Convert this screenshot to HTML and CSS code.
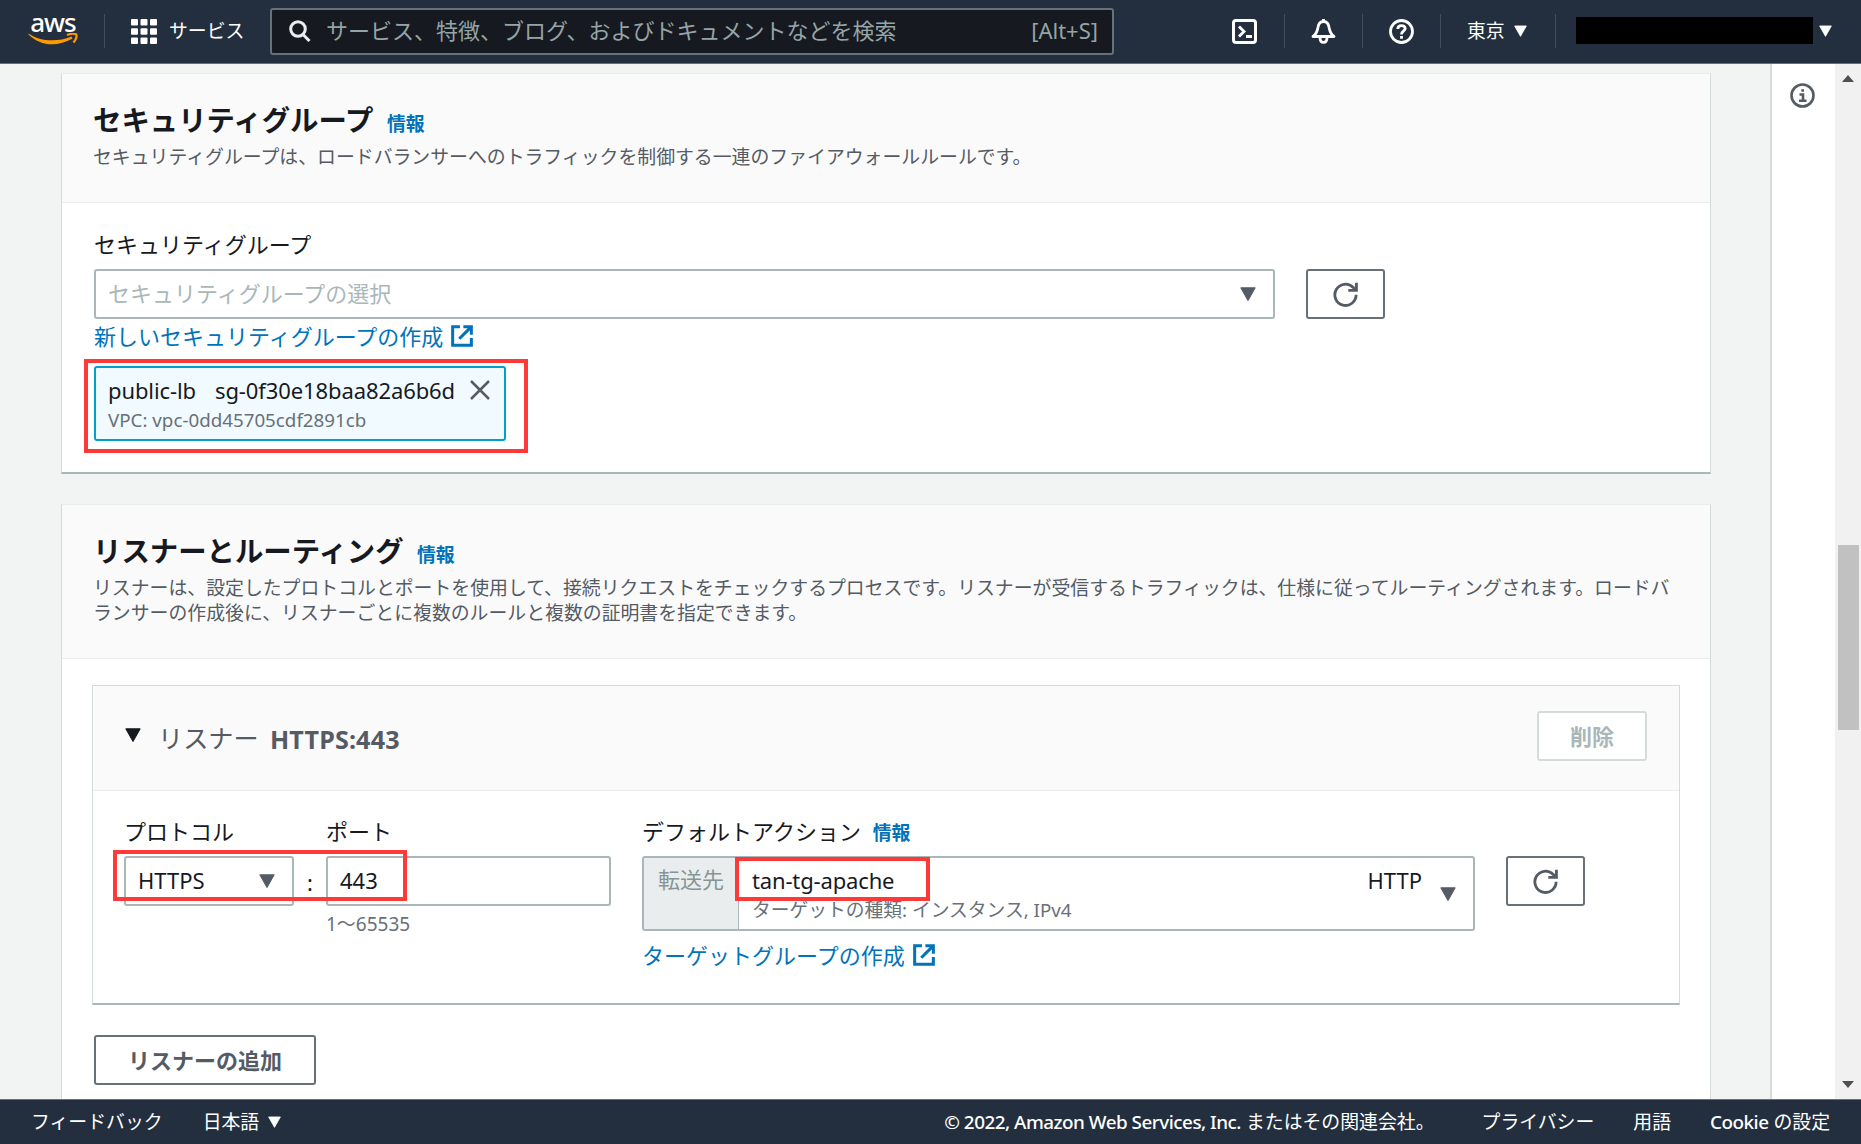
FILE: index.html
```html
<!DOCTYPE html>
<html lang="ja">
<head>
  <meta charset="UTF-8">
  <meta name="viewport" content="width=device-width, initial-scale=1.0">
  <title>ロードバランサーの作成 | EC2</title>
  <link rel="stylesheet" href="styles.css">
</head>
<body>

  <!-- Icons used more than once -->
  <svg class="sprite">
    <symbol id="icon-refresh" viewBox="0 0 16 16">
      <path d="M14.8 8.2A6.8 6.8 0 1 1 12.8 3.4L14.6 5.2M15 0.4V5.400H9.800" fill="none" stroke="currentColor" stroke-width="1.8"/>
    </symbol>
    <symbol id="icon-external" viewBox="0 0 16 16">
      <path d="M6.5 1.2H1.2V14.8H14.8V9.500M9 1.2H14.8V7M14.5 1.5L6 10" fill="none" stroke="currentColor" stroke-width="2.200"/>
    </symbol>
    <symbol id="icon-caret" viewBox="0 0 16 14">
      <path d="M0.8 0.8H15.2L8 13.6Z" fill="currentColor" stroke="currentColor" stroke-width="1" stroke-linejoin="round"/>
    </symbol>
  </svg>

  <header class="topbar">
    <div class="logo">
      <span>aws</span>
      <svg viewBox="0 0 50 13"><path d="M0.500 0.500C12 8.500 29 9.500 43.500 3.500L44.500 5.500C29 14.500 12 13 0.500 1.500Z" fill="#f90"/><path d="M39 2C43 0.500 47 0.500 48.300 1.500C49 3.500 47.500 7 45.500 9.500" fill="none" stroke="#f90" stroke-width="2.200"/></svg>
    </div>
    <div class="divider"></div>
    <a class="services">
      <svg viewBox="0 0 26 25" fill="#fff"><rect width="7" height="6.500" rx="1"/><rect x="9.500" width="7" height="6.500" rx="1"/><rect x="19" width="7" height="6.500" rx="1"/><rect y="9.300" width="7" height="6.500" rx="1"/><rect x="9.500" y="9.300" width="7" height="6.500" rx="1"/><rect x="19" y="9.300" width="7" height="6.500" rx="1"/><rect y="18.500" width="7" height="6.500" rx="1"/><rect x="9.500" y="18.500" width="7" height="6.500" rx="1"/><rect x="19" y="18.500" width="7" height="6.500" rx="1"/></svg>
      <span>サービス</span>
    </a>
    <div class="search">
      <svg viewBox="0 0 22 22" fill="none" stroke="#eaeded" stroke-width="3"><circle cx="9" cy="9" r="7.300"/><path d="M14 14.500L20.500 21"/></svg>
      <span class="search-text">サービス、特徴、ブログ、およびドキュメントなどを検索</span>
      <span class="shortcut">[Alt+S]</span>
    </div>
    <nav class="tools">
      <div class="tool"><svg viewBox="0 0 25 25" fill="none" stroke="#fff" stroke-width="3"><rect x="1.500" y="1.500" width="22" height="22" rx="2.500"/><path d="M7 7.500L12 12.500L7 17.500M14 17.500H20" stroke-width="2.800"/></svg></div>
      <div class="tool"><svg viewBox="0 0 25 25" fill="none" stroke="#fff" stroke-width="2.800"><path d="M2 17.500C5.500 15 6.300 12 6.800 9C7.300 5 9.500 2.500 12.500 2.500S17.700 5 18.200 9C18.700 12 19.500 15 23 17.500Z" stroke-linejoin="round"/><path d="M9 18.500C9 25 16 25 16 18.500M12.500 0V3"/></svg></div>
      <div class="tool"><svg viewBox="0 0 25 25" fill="none" stroke="#fff" stroke-width="2.800"><circle cx="12.500" cy="12.500" r="11"/><path d="M8.800 10C8.800 5.500 16.200 5.500 16.200 9.500C16.200 12 12.500 12 12.500 15.500M12.500 17V19.800"/></svg></div>
      <div class="region">東京 <svg class="caret"><use href="#icon-caret"/></svg></div>
      <div class="account"><div class="account-name"></div><svg class="caret"><use href="#icon-caret"/></svg></div>
    </nav>
  </header>

  <div class="page">
    <main class="content">

      <!-- Security groups -->
      <section class="card">
        <div class="card-header">
          <h2>セキュリティグループ <a class="info">情報</a></h2>
          <p>セキュリティグループは、ロードバランサーへのトラフィックを制御する一連のファイアウォールルールです。</p>
        </div>
        <div class="card-body">
          <div class="label">セキュリティグループ</div>
          <div class="row">
            <div class="field group-select">
              <span>セキュリティグループの選択</span>
              <svg class="arrow"><use href="#icon-caret"/></svg>
            </div>
            <button class="btn btn-refresh"><svg><use href="#icon-refresh"/></svg></button>
          </div>
          <a class="link">新しいセキュリティグループの作成<svg><use href="#icon-external"/></svg></a>
          <div class="token">
            <div class="token-name"><span class="w-name">public-lb</span><span>sg-0f30e18baa82a6b6d</span>
              <svg viewBox="0 0 20 20"><path d="M1 1L19 19M19 1L1 19" stroke="#545b64" stroke-width="2.500"/></svg>
            </div>
            <div class="token-vpc">VPC: vpc-0dd45705cdf2891cb</div>
            <div class="mark mark-token"></div>
          </div>
        </div>
      </section>

      <!-- Listeners and routing -->
      <section class="card">
        <div class="card-header card-header-tall">
          <h2>リスナーとルーティング <a class="info">情報</a></h2>
          <p>リスナーは、設定したプロトコルとポートを使用して、接続リクエストをチェックするプロセスです。リスナーが受信するトラフィックは、仕様に従ってルーティングされます。ロードバ<br>ランサーの作成後に、リスナーごとに複数のルールと複数の証明書を指定できます。</p>
        </div>
        <div class="card-body listeners">
          <div class="listener">
            <div class="listener-header">
              <svg class="arrow"><use href="#icon-caret"/></svg>
              <span class="listener-title">リスナー</span>
              <strong>HTTPS:443</strong>
              <button class="btn btn-delete" disabled>削除</button>
            </div>
            <div class="listener-body">
              <div class="col-protocol">
                <div class="label">プロトコル</div>
                <div class="field"><span>HTTPS</span><svg class="arrow"><use href="#icon-caret"/></svg></div>
                <div class="mark mark-port"></div>
              </div>
              <div class="colon">:</div>
              <div class="col-port">
                <div class="label">ポート</div>
                <div class="field"><span>443</span></div>
                <div class="hint">1〜65535</div>
              </div>
              <div class="col-action">
                <div class="label">デフォルトアクション <a class="info">情報</a></div>
                <div class="forward">
                  <div class="forward-label">転送先</div>
                  <div class="forward-target">
                    <div class="target-name">tan-tg-apache</div>
                    <div class="target-type">ターゲットの種類: インスタンス, IPv4</div>
                    <div class="mark mark-target"></div>
                  </div>
                  <div class="forward-protocol">HTTP</div>
                  <svg class="arrow"><use href="#icon-caret"/></svg>
                </div>
                <a class="link">ターゲットグループの作成<svg><use href="#icon-external"/></svg></a>
              </div>
              <button class="btn btn-refresh"><svg><use href="#icon-refresh"/></svg></button>
            </div>
          </div>
          <button class="btn btn-add">リスナーの追加</button>
        </div>
      </section>

    </main>

    <aside class="help-panel">
      <svg viewBox="0 0 25 25" fill="none" stroke="#545b64" stroke-width="2.600"><circle cx="12.500" cy="12.500" r="11"/><path d="M9.500 11.500H13V17.500M9 17.800H16.500M11.300 7.500H14"/></svg>
    </aside>

    <div class="scrollbar">
      <svg viewBox="0 0 12 7"><path d="M0 7L6 0L12 7Z" fill="#505050"/></svg>
      <div class="thumb"></div>
      <svg viewBox="0 0 12 7"><path d="M0 0L6 7L12 0Z" fill="#505050"/></svg>
    </div>
  </div>

  <footer class="footer">
    <a>フィードバック</a>
    <a class="language">日本語 <svg class="caret"><use href="#icon-caret"/></svg></a>
    <span class="copyright"><span class="latin">© 2022, Amazon Web Services, Inc.</span> またはその関連会社。</span>
    <a class="privacy">プライバシー</a>
    <a class="terms">用語</a>
    <a class="cookie"><span class="latin">Cookie</span> の設定</a>
  </footer>

</body>
</html>
```
FILE: styles.css
```css
* {
  box-sizing: border-box;
}

body {
  margin: 0;
  height: 1144px;
  display: flex;
  flex-direction: column;
  overflow: hidden;
  font-family: 'Noto Sans', 'Noto Sans CJK JP', sans-serif;
  font-size: 22px;
  line-height: 34px;
  color: #16191f;
  background: #f2f3f3;
}

svg {
  display: block;
  flex: none;
}

.sprite {
  position: absolute;
  width: 0;
  height: 0;
}

/* Top bar */
.topbar {
  display: flex;
  align-items: center;
  flex: none;
  height: 64px;
  padding: 0 29px 1px 28px;
  background: #232f3e;
  border-bottom: 1px solid #687078;
  color: #fff;
  font-size: 18.86px;
}

.logo {
  width: 50px;
}

.logo span {
  display: block;
  height: 18px;
  margin-top: -2px;
  font: 500 26px/14px 'Noto Sans', sans-serif;
  letter-spacing: -1px;
  text-align: center;
}

.logo svg {
  width: 50px;
  height: 13px;
}

.divider {
  width: 1px;
  height: 34px;
  margin: 0 26px;
  background: #414d5c;
}

.services {
  display: flex;
  align-items: center;
  gap: 12px;
  width: 139px;
}

.services svg {
  width: 26px;
  height: 25px;
}

.search {
  display: flex;
  align-items: center;
  width: 844px;
  height: 47px;
  padding: 0 14px 0 17px;
  background: #16191f;
  border: 2px solid #687078;
  border-radius: 3px;
  color: #95a5a6;
  font-size: 22px;
}

.search span {
  margin-top: -2px;
}

.search svg {
  width: 22px;
  height: 22px;
  margin-right: 15px;
}

.search-text {
  flex: 1;
}

.tools {
  display: flex;
  align-items: center;
  margin-left: auto;
}

.tools > div {
  display: flex;
  align-items: center;
  height: 34px;
}

.tools > div + div {
  border-left: 1px solid #414d5c;
}

.tools .tool {
  width: 78px;
  padding-left: 26px;
}

.tool svg {
  width: 25px;
  height: 25px;
}

.caret {
  width: 13px;
  height: 12px;
}

.tools .region {
  width: 115px;
  padding-left: 26px;
  gap: 9px;
}

.tools .account {
  padding-left: 20px;
  gap: 6px;
}

.account-name {
  width: 237px;
  height: 27px;
  margin-top: -1px;
  background: #000;
}

/* Page */
.page {
  display: flex;
  flex: 1;
  min-height: 0;
}

.content {
  flex: 1;
  height: 1035px;
  padding: 9px 59px 0 61px;
  overflow: hidden;
}

.card {
  margin-bottom: 30px;
  background: #fff;
  border: 1px solid #d5dbdb;
  border-top-color: #eaeded;
  border-bottom: 2px solid #aab7b8;
}

.card-header {
  height: 129px;
  padding: 26px 31px 0;
  background: #fafafa;
  border-bottom: 1px solid #eaeded;
}

.card-header-tall {
  height: 154px;
}

h2 {
  margin: 0;
  font-size: 28.4px;
  line-height: 41px;
}

.info {
  margin-left: 6px;
  color: #0073bb;
  font-size: 18.86px;
  font-weight: bold;
}

.card-header p {
  margin: 0;
  color: #545b64;
  font-size: 18.86px;
  line-height: 25px;
  white-space: nowrap;
}

.card-body {
  height: 269px;
  padding: 24px 31px 0 32px;
}

.label {
  height: 42px;
}

.row {
  display: flex;
  gap: 31px;
}

.field {
  display: flex;
  align-items: center;
  justify-content: space-between;
  height: 50px;
  padding: 0 17px 0 12px;
  background: #fff;
  border: 2px solid #aab7b8;
  border-radius: 3px;
}

.field span {
  margin-top: -2px;
}

.group-select {
  width: 1181px;
  color: #aab7b8;
}

.arrow {
  width: 16px;
  height: 14px;
  color: #545b64;
}

.btn {
  height: 50px;
  padding: 0;
  background: #fff;
  border: 2px solid #687078;
  border-radius: 3px;
  color: #545b64;
  font: bold 22px/34px 'Noto Sans', 'Noto Sans CJK JP', sans-serif;
}

.btn-refresh {
  width: 79px;
}

.btn-refresh svg {
  width: 25px;
  height: 25px;
  margin: auto;
}

.link {
  display: flex;
  align-items: center;
  height: 33px;
  color: #0073bb;
}

.link svg {
  width: 22px;
  height: 22px;
  margin-left: 8px;
}

.token {
  position: relative;
  width: 412px;
  height: 75px;
  margin-top: 14px;
  padding: 7px 14px 8px 12px;
  background: #f1faff;
  border: 2px solid #00a1c9;
  border-radius: 3px;
}

.token-name {
  display: flex;
  align-items: center;
  height: 30px;
  letter-spacing: -0.1px;
}

.token-name svg {
  width: 20px;
  height: 20px;
  margin-left: auto;
}

.w-name {
  width: 107px;
}

.token-vpc {
  color: #687078;
  font-size: 18.75px;
  line-height: 30px;
}

/* Red marker boxes drawn over the form */
.mark {
  position: absolute;
  border: 4px solid #ff3838;
}

.mark-token {
  left: -12px;
  top: -9px;
  width: 444px;
  height: 94px;
}

/* Listener */
.card-body.listeners {
  height: 480px;
  padding-top: 26px;
}

.listener {
  height: 320px;
  margin: 0 -1px 0 -2px;
  border: 1px solid #d5dbdb;
  border-bottom: 2px solid #aab7b8;
}

.listener-header {
  display: flex;
  align-items: center;
  height: 105px;
  padding: 0 32px;
  background: #fafafa;
  border-bottom: 1px solid #eaeded;
  color: #545b64;
  font-size: 25.14px;
}

.listener-header .arrow {
  margin-right: 17px;
  margin-top: -6px;
  color: #16191f;
}

.listener-title {
  width: 112px;
}

.listener-header strong {
  margin-top: 2px;
  letter-spacing: 0.15px;
}

.btn-delete {
  width: 110px;
  margin: -5px 0 0 auto;
  border-color: #d5dbdb;
  color: #aab7b8;
}

.listener-body {
  display: flex;
  padding: 23px 31px 0;
}

.col-protocol {
  position: relative;
  width: 170px;
}

.colon {
  width: 32px;
  padding-top: 51px;
  text-align: center;
}

.col-port {
  width: 285px;
  margin-right: 31px;
}

.hint {
  padding-top: 1px;
  color: #687078;
  font-size: 19px;
}

.col-action {
  width: 833px;
  margin-right: 31px;
}

.col-action .link {
  margin-top: 7px;
}

.listener-body .btn-refresh {
  margin-top: 42px;
}

.forward {
  display: flex;
  height: 75px;
  border: 2px solid #aab7b8;
  border-radius: 3px;
}

.forward-label {
  width: 95px;
  padding: 4px 0 0 14px;
  background: #eaeded;
  border-right: 1px solid #aab7b8;
  color: #879596;
}

.forward-target {
  position: relative;
  flex: 1;
  padding: 5px 0 0 13px;
}

.target-name {
  letter-spacing: -0.15px;
}

.target-type {
  color: #687078;
  font-size: 18.75px;
  line-height: 26px;
}

.forward-protocol {
  padding: 5px 18px 0 0;
}

.forward .arrow {
  margin: 29px 17px 0 0;
}

.mark-port {
  left: -11px;
  top: 36px;
  z-index: 1;
  width: 294px;
  height: 51px;
}

.mark-target {
  left: -4px;
  top: -1px;
  width: 195px;
  height: 44px;
}

.btn-add {
  width: 222px;
  margin-top: 30px;
}

/* Help panel and scrollbar */
.help-panel {
  width: 65px;
  padding: 19px 0 0 18px;
  background: #fff;
  border-left: 2px solid #d5dbdb;
}

.help-panel svg {
  width: 25px;
  height: 25px;
}

.scrollbar {
  display: flex;
  flex-direction: column;
  align-items: center;
  justify-content: space-between;
  width: 26px;
  padding: 11px 0;
  background: #f1f1f1;
}

.scrollbar svg {
  width: 12px;
  height: 7px;
}

.thumb {
  width: 21px;
  height: 185px;
  margin-top: 112px;
  background: #c1c1c1;
}

/* Footer */
.footer {
  display: flex;
  align-items: center;
  flex: none;
  height: 45px;
  padding: 0 31px;
  background: #232f3e;
  border-top: 1px solid #687078;
  color: #fff;
  font-size: 18.86px;
  white-space: nowrap;
}

.language {
  display: flex;
  align-items: center;
  gap: 9px;
  margin-left: 40px;
}

.copyright {
  margin-left: auto;
}

.privacy {
  margin-left: 47px;
}

.terms,
.cookie {
  margin-left: 39px;
}

.latin {
  font-weight: 500;
  letter-spacing: -0.5px;
}
```
